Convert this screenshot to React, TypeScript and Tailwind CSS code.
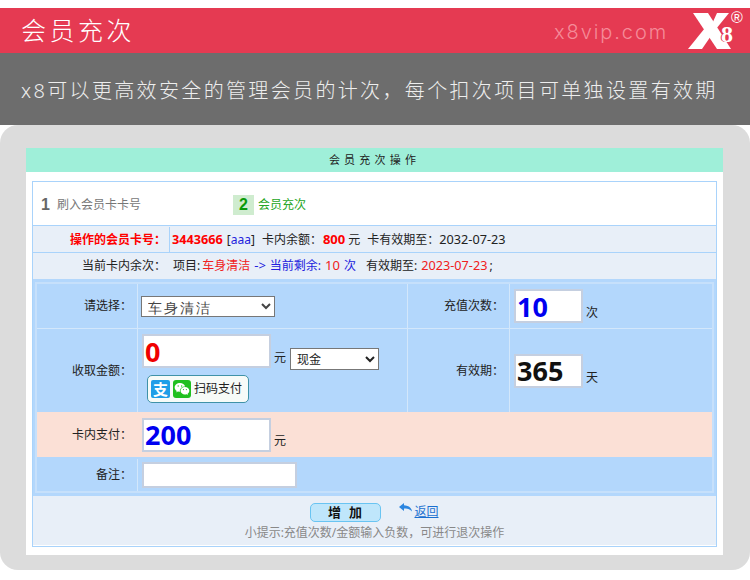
import { RiWechatFill } from "react-icons/ri";

const cjk = "font-['Noto_Sans','Noto_Sans_CJK_SC',sans-serif]";

const NumberBox = ({ value, color, width }: { value: string; color: string; width: string }) => (
  <input
    readOnly
    value={value}
    className={`${width} h-[34px] border-2 border-[#c5cfe0] bg-white pl-[1px] font-['Noto_Sans',sans-serif] text-[27px] leading-none font-bold outline-none ${color}`}
  />
);

const Label = ({ children, width = "w-[100px]" }: { children: React.ReactNode; width?: string }) => (
  <div className={`flex ${width} shrink-0 items-center justify-end pr-[5px] text-[12px] text-[#222]`}>{children}</div>
);

const Logo = () => (
  <div className="relative h-[40px] w-[58px]">
    <svg viewBox="0 0 58 40" className="absolute inset-0 h-full w-full">
      <polygon points="5,2 20,2 43,38 29,38" fill="#fff" />
      <polygon points="0,38 14,38 25,22 17,17" fill="#fff" />
      <polygon points="24,13 28,18 41,2 29,2" fill="#fff" />
    </svg>
    <span className="absolute top-[11px] left-[33px] font-['Liberation_Serif',serif] text-[24px] leading-none font-bold text-white [text-shadow:-1px_0_0_#e53a52]">8</span>
    <span className="absolute top-[-1px] left-[43px] font-['Liberation_Sans',sans-serif] text-[16px] leading-none text-white">®</span>
  </div>
);

export default function App() {
  return (
    <div className={`h-[580px] w-[750px] overflow-hidden bg-white pt-2 ${cjk}`}>
      <div className="flex h-[45px] items-center justify-between bg-[#e53a52] pr-[4px] pl-[21px]">
        <h1 className="text-[25px] font-light tracking-[3.5px] text-white">会员充次</h1>
        <div className="flex items-center gap-[20px]">
          <span className="mt-[2px] font-['Inter',sans-serif] text-[20px] font-light tracking-[1.9px] text-[#f58b99]">x8vip.com</span>
          <Logo />
        </div>
      </div>

      <div className="flex h-[72px] items-center bg-[#6d6d6d] pt-[4px] pl-[21px]">
        <p className="text-[20px] font-light tracking-[2.35px] whitespace-nowrap text-[#eeeeee]">x8可以更高效安全的管理会员的计次，每个扣次项目可单独设置有效期</p>
      </div>

      <div className="h-[445px] rounded-[18px] bg-[#dcdcdc] px-[26px] pt-[23px]">
        <div className="h-[407px] w-[697px] bg-white">
          <div className="flex h-[24px] items-center justify-center bg-[#9fefd9] text-[11px] tracking-[4.2px] text-[#222]">会员充次操作</div>

          <div className="mx-[6px] mt-[9px] h-[366px] border border-[#a9d3fb]">
            <div className="flex h-[44px] items-center border-b border-[#a9d3fb] bg-white pt-[2px] pl-[8px]">
              <div className="flex w-[192px] items-center">
                <span className="w-[16px] font-['Liberation_Sans',sans-serif] text-[16px] font-bold text-[#666]">1</span>
                <span className="text-[12px] text-[#777]">刷入会员卡卡号</span>
              </div>
              <div className="flex items-center">
                <span className="flex h-[20px] w-[21px] items-center justify-center bg-[#cfeccf] font-['Liberation_Sans',sans-serif] text-[16px] font-bold text-[#0a9a0a]">2</span>
                <span className="ml-[4px] text-[12px] text-[#25a525]">会员充次</span>
              </div>
            </div>

            <div className="flex h-[27px] items-center border-b border-[#a9d3fb] bg-[#e8eff8] pt-[1px] text-[12px] text-[#222]">
              <div className="flex h-full w-[137px] items-center justify-end border-r border-[#a9d3fb] pr-[3px] font-bold text-[#f00]">操作的会员卡号：</div>
              <div className="flex items-center pl-[2px] whitespace-nowrap">
                <span className="text-[12.7px] font-bold text-[#f00]">3443666</span>
                <span className="ml-[4px]">[<span className="text-[#2222dd]">aaa</span>]</span>
                <span className="ml-[7px]">卡内余额：</span>
                <span className="ml-[1px] text-[13px] font-bold text-[#f00]">800</span>
                <span className="ml-[3px]">元</span>
                <span className="ml-[7px]">卡有效期至：</span>
                <span className="text-[12.7px]">2032-07-23</span>
              </div>
            </div>

            <div className="flex h-[26px] items-center bg-[#e8eff8] text-[12px] text-[#222]">
              <div className="flex h-full w-[137px] items-center justify-end pr-[4px]">当前卡内余次：</div>
              <div className="flex items-center pl-[3px] whitespace-nowrap">
                <span>项目:</span>
                <span className="ml-[2px] text-[#f02020]">车身清洁</span>
                <span className="ml-[4px] text-[13px] text-[#2222dd]">-&gt;</span>
                <span className="ml-[4px] text-[#2222dd]">当前剩余:</span>
                <span className="ml-[4px] text-[13px] text-[#f02020]">10</span>
                <span className="ml-[4px] text-[#2222dd]">次</span>
                <span className="ml-[10px]">有效期至:</span>
                <span className="ml-[4px] text-[12.7px] text-[#f02020]">2023-07-23</span>
                <span className="ml-[2px]">;</span>
              </div>
            </div>

            <div className="h-[217px] border-t-[3px] border-b-[3px] border-[#b3d7fc] bg-[#b3d7fc] px-[2px]">
              <div className="flex h-[211px] flex-col border-2 border-[#c6e0fb] text-[#222]">
                <div className="flex h-[45px] border-b border-[#d3e7fb]">
                  <Label>请选择：</Label>
                  <div className="flex w-[271px] items-center border-x border-[#d3e7fb] pl-[3px]">
                    <select className="h-[21px] w-[134px] border border-[#777] bg-white pl-[2px] font-['Noto_Sans',sans-serif] text-[14px] tracking-[2px] text-[#444]">
                      <option>车身清洁</option>
                    </select>
                  </div>
                  <Label width="w-[101px]">充值次数：</Label>
                  <div className="flex flex-1 items-center border-l border-[#d3e7fb] pl-[4px]">
                    <NumberBox value="10" color="text-[#0000f0]" width="w-[69px]" />
                    <span className="mt-[14px] ml-[3px] text-[12px]">次</span>
                  </div>
                </div>

                <div className="flex h-[83px]">
                  <Label>收取金额：</Label>
                  <div className="flex w-[271px] flex-col border-x border-[#d3e7fb] pt-[5px] pl-[4px]">
                    <div className="flex items-start">
                      <NumberBox value="0" color="text-[#f00000]" width="w-[129px]" />
                      <span className="mt-[15px] ml-[3px] text-[12px]">元</span>
                      <select className="mt-[14px] ml-[4px] h-[22px] w-[89px] border border-[#777] bg-white pl-[2px] text-[12px] text-[#222]">
                        <option>现金</option>
                      </select>
                    </div>
                    <div className="mt-[5px] ml-[5px] flex h-[28px] w-[102px] items-center rounded-[5px] border border-[#3f92a8] bg-[#f7fbf8] pl-[3px]">
                      <span className="flex h-[18px] w-[19px] items-center justify-center rounded-[2px] bg-[#1f9ee8] text-[15px] leading-none font-bold text-white">支</span>
                      <span className="ml-[3px] flex h-[18px] w-[18px] items-center justify-center rounded-[3px] bg-[#1fc01f] text-white">
                        <RiWechatFill size={16} />
                      </span>
                      <span className="ml-[3px] text-[12px] text-[#222]">扫码支付</span>
                    </div>
                  </div>
                  <Label width="w-[101px]">有效期：</Label>
                  <div className="flex flex-1 items-center border-l border-[#d3e7fb] pl-[4px]">
                    <NumberBox value="365" color="text-[#111]" width="w-[69px]" />
                    <span className="mt-[14px] ml-[3px] text-[12px]">天</span>
                  </div>
                </div>

                <div className="flex h-[45px] bg-[#fbe0d6]">
                  <Label>卡内支付：</Label>
                  <div className="flex items-center pl-[5px]">
                    <NumberBox value="200" color="text-[#0000f0]" width="w-[129px]" />
                    <span className="mt-[12px] ml-[3px] text-[12px]">元</span>
                  </div>
                </div>

                <div className="flex flex-1 pt-[2px]">
                  <Label>备注：</Label>
                  <div className="flex items-center border-l border-[#d3e7fb] pl-[4px]">
                    <input readOnly className="h-[26px] w-[155px] border-2 border-[#c5cfe0] bg-white outline-none" />
                  </div>
                </div>
              </div>
            </div>

            <div className="flex h-[49px] flex-col items-center bg-[#e8eff8] pt-[7px]">
              <div className="flex items-start">
                <button className="h-[19px] w-[71px] rounded-[5px] border border-[#69c4f2] bg-[#bfe6fb] pl-[6px] text-[13px] leading-none font-bold tracking-[8px] text-[#111]">增加</button>
                <svg width="16" height="12" viewBox="0 0 16 12" className="ml-[17px]">
                  <path d="M6 0 1 4l5 4V5.5c3 0 6 .5 8 3-.5-4-3.5-6-8-6.3z" fill="#2c86e0" />
                </svg>
                <a className="text-[12px] text-[#1a6fd0] underline">返回</a>
              </div>
              <p className="mt-[2px] text-[12px] text-[#888]">小提示:充值次数/金额输入负数，可进行退次操作</p>
            </div>
          </div>
        </div>
      </div>
    </div>
  );
}
